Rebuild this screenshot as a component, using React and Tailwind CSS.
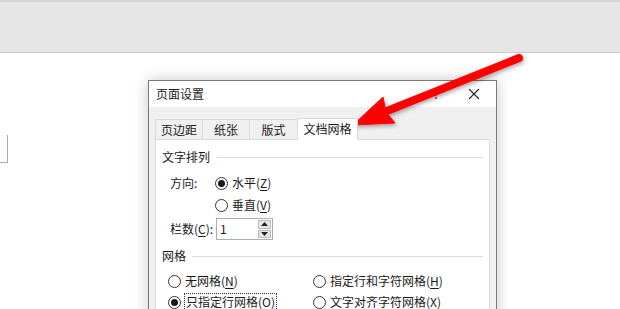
import React from "react"

function Radio({ checked }) {
  return (
    <span className="w-[13px] h-[13px] rounded-full border border-[#333] bg-white flex items-center justify-center shrink-0">
      {checked && <span className="w-[7px] h-[7px] rounded-full bg-[#1a1a1a]" />}
    </span>
  )
}

function Key({ k }) {
  return (
    <span>
      (<span className="underline underline-offset-2">{k}</span>)
    </span>
  )
}

function Option({ checked, label, k, focused, className = "" }) {
  return (
    <div className={"flex items-center gap-[4px] " + className}>
      <Radio checked={checked} />
      <span className={focused ? "outline outline-1 outline-dotted outline-[#333] px-px" : ""}>
        {label}
        <Key k={k} />
      </span>
    </div>
  )
}

function Section({ title, children }) {
  return (
    <div>
      <div className="flex items-center gap-[6px] h-[16px]">
        <span>{title}</span>
        <div className="flex-1 h-px bg-[#dcdcdc]" />
      </div>
      {children}
    </div>
  )
}

function Arrow() {
  return (
    <svg className="absolute inset-0 pointer-events-none" width="620" height="309" viewBox="0 0 620 309">
      <defs>
        <filter id="sh" x="-20%" y="-20%" width="140%" height="140%">
          <feDropShadow dx="1" dy="2" stdDeviation="2" floodColor="#000" floodOpacity="0.35" />
        </filter>
      </defs>
      <g filter="url(#sh)" fill="#ff0000" stroke="#ff0000">
        <line x1="519" y1="58" x2="382" y2="113" strokeWidth="8" strokeLinecap="round" />
        <polygon points="353,125 383,97 386,112 395,123" strokeWidth="1" strokeLinejoin="round" />
      </g>
    </svg>
  )
}

export default function App() {
  const tabs = [
    { name: "页边距", w: "w-[48px]" },
    { name: "纸张", w: "w-[48px]" },
    { name: "版式", w: "w-[49px]" },
  ]

  return (
    <div
      className="relative w-[620px] h-[309px] overflow-hidden bg-white text-[12px] text-[#1a1a1a] leading-[16px]"
      style={{ fontFamily: '"Noto Sans CJK SC", "Noto Sans", sans-serif' }}
    >
      {/* ribbon strip */}
      <div className="h-[53px] bg-[#e6e6e6] border-t-2 border-[#d6d6d6] border-b border-b-[#c9c9c9]" />

      {/* page edge */}
      <div className="mt-[82px] w-[8px] h-[28px] border-r border-b border-[#adadad]" />

      {/* dialog */}
      <div className="absolute left-[148px] top-[80px] w-[349px] h-[260px] border border-[#7a7a7a] bg-[#f0f0f0] shadow-[0_0_14px_rgba(0,0,0,0.22)]">
        <div className="h-[26px] bg-white flex items-center pl-[7px]">
          <span className="flex-1">页面设置</span>
          <span className="w-[20px] mr-[6px] text-center text-[#333]">?</span>
          <span className="w-[44px] flex justify-center">
            <svg width="12" height="12" viewBox="0 0 12 12">
              <path d="M1 1 L11 11 M11 1 L1 11" stroke="#222" strokeWidth="1.1" />
            </svg>
          </span>
        </div>

        <div className="px-[6px] pt-[10px]">
          <div className="flex items-end h-[22px]">
            {tabs.map((t) => (
              <div
                key={t.name}
                className={t.w + " h-[20px] flex items-center justify-center border border-b-0 border-[#d9d9d9] -mr-px bg-[#f0f0f0]"}
              >
                {t.name}
              </div>
            ))}
            <div className="w-[61px] h-[22px] flex items-center justify-center border border-b-0 border-[#d9d9d9] bg-white relative z-10 -mb-px pb-px">
              文档网格
            </div>
          </div>

          <div className="bg-white border border-[#d9d9d9] h-[200px] pl-[6px] pr-[6px] pt-[9px]">
            <Section title="文字排列">
              <div className="pl-[8px] pt-[10px]">
                <div className="flex items-center h-[16px]">
                  <span className="w-[45px]">方向:</span>
                  <Option checked label="水平" k="Z" />
                </div>
                <div className="flex items-center h-[16px] mt-[6px] pl-[45px]">
                  <Option label="垂直" k="V" />
                </div>
                <div className="flex items-center mt-[5px]">
                  <span className="w-[46px]">
                    栏数<Key k="C" />:
                  </span>
                  <div className="w-[57px] h-[22px] border border-[#adadad] bg-white flex">
                    <span className="flex-1 pl-[3px] leading-[20px]">1</span>
                    <div className="w-[14px] flex flex-col gap-px py-px pr-px">
                      <div className="flex-1 bg-[#e5e5e5] border border-[#bcbcbc] flex items-center justify-center">
                        <svg width="7" height="4" viewBox="0 0 7 4"><path d="M0 4 L3.5 0 L7 4Z" fill="#222" /></svg>
                      </div>
                      <div className="flex-1 bg-[#e5e5e5] border border-[#bcbcbc] flex items-center justify-center">
                        <svg width="7" height="4" viewBox="0 0 7 4"><path d="M0 0 L3.5 4 L7 0Z" fill="#222" /></svg>
                      </div>
                    </div>
                  </div>
                </div>
              </div>
            </Section>

            <div className="mt-[8px]">
              <Section title="网格">
                <div className="pl-[6px] pt-[9px] grid grid-cols-[145px_1fr] gap-y-[5px]">
                  <Option label="无网格" k="N" />
                  <Option label="指定行和字符网格" k="H" />
                  <Option checked focused label="只指定行网格" k="O" />
                  <Option label="文字对齐字符网格" k="X" />
                </div>
              </Section>
            </div>
          </div>
        </div>
      </div>

      <Arrow />
    </div>
  )
}
